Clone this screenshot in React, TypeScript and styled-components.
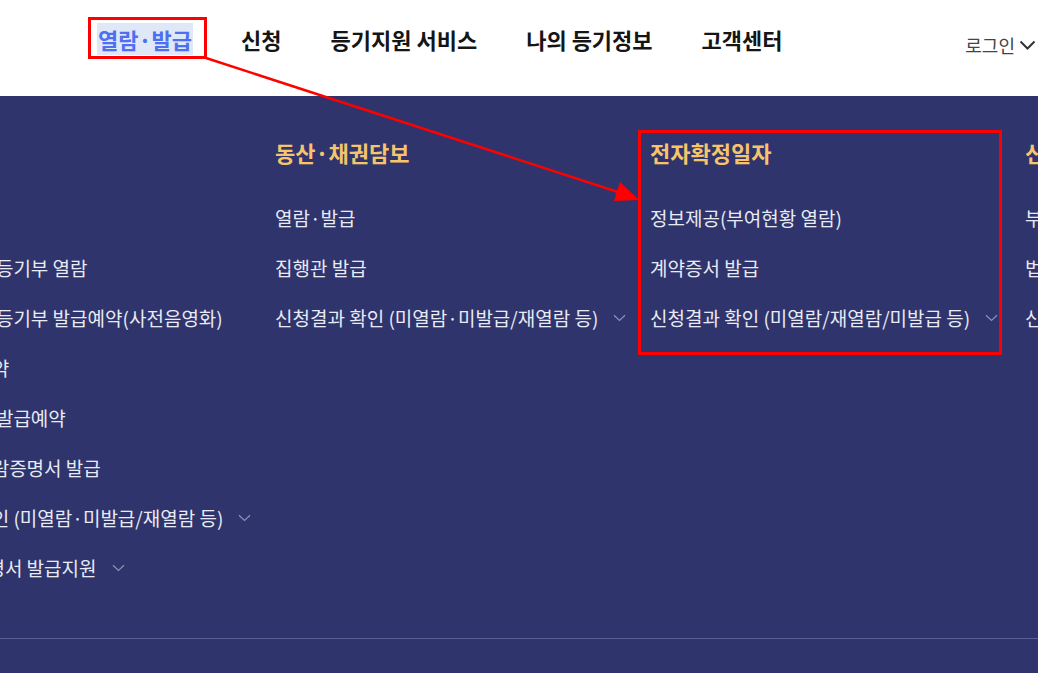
import React from "react";
import styled, { createGlobalStyle } from "styled-components";

const GlobalStyle = createGlobalStyle`
  * { box-sizing: border-box; }
  html, body { margin: 0; padding: 0; }
  body {
    font-family: "Noto Sans CJK KR", "Noto Sans", sans-serif;
    background: #ffffff;
    overflow: hidden;
  }
`;

const Page = styled.div`
  position: relative;
  width: 1038px;
  height: 673px;
  overflow: hidden;
`;

const Header = styled.header`
  height: 96px;
  background: #ffffff;
  display: flex;
  align-items: flex-start;
  padding-left: 97px;
`;

const Nav = styled.nav`
  display: flex;
  gap: 47px;
  padding-top: 23px;
`;

const NavItem = styled.a<{ $active?: boolean }>`
  font-size: 22px;
  font-weight: 700;
  line-height: 32px;
  color: ${(p) => (p.$active ? "#4e6ff2" : "#151515")};
  background: ${(p) => (p.$active ? "#dfe8f6" : "transparent")};
  padding: 0 1px;
  text-decoration: none;
  white-space: nowrap;
`;

const Login = styled.div`
  margin-left: auto;
  padding-top: 32px;
  display: flex;
  align-items: center;
  gap: 4px;
  font-size: 18px;
  color: #444;
  line-height: 26px;
  margin-right: 2px;
`;

const Panel = styled.section`
  background: #2f346c;
  height: 577px;
  display: flex;
  flex-direction: column;
`;

const Columns = styled.div`
  display: flex;
  margin-left: -100px;
  padding-top: 42px;
  height: 542px;
`;

const Column = styled.div`
  flex: 0 0 375px;
  display: flex;
  flex-direction: column;
`;

const Heading = styled.h3`
  margin: 0 0 26px;
  font-size: 22px;
  font-weight: 700;
  line-height: 29px;
  color: #f7c46c;
  white-space: nowrap;
`;

const Item = styled.div`
  height: 50px;
  display: flex;
  align-items: center;
  font-size: 19px;
  line-height: 26px;
  color: #e8eaf4;
  white-space: nowrap;
`;

const Chevron = styled.svg`
  margin-left: 15px;
  flex: none;
`;

const Divider = styled.hr`
  margin: 0;
  border: 0;
  height: 1px;
  background: #5b6093;
`;

const Overlay = styled.svg`
  position: absolute;
  left: 0;
  top: 0;
  pointer-events: none;
`;

const Down = () => (
  <Chevron width="13" height="8" viewBox="0 0 13 8">
    <path d="M1 1.2 L6.5 6.5 L12 1.2" fill="none" stroke="#8c91ba" strokeWidth="1.2" />
  </Chevron>
);

type Col = { title: string; items: { label: string; more?: boolean }[] };

const columns: Col[] = [
  {
    title: "등기부",
    items: [
      { label: "열람·발급" },
      { label: "부동산 법인 등기부 열람" },
      { label: "부동산 법인 등기부 발급예약(사전음영화)" },
      { label: "등기열람 예약" },
      { label: "부동산 법인 발급예약" },
      { label: "등기사항 열람증명서 발급" },
      { label: "신청결과 확인 (미열람·미발급/재열람 등)", more: true },
      { label: "법인인감증명서 발급지원", more: true },
    ],
  },
  {
    title: "동산·채권담보",
    items: [
      { label: "열람·발급" },
      { label: "집행관 발급" },
      { label: "신청결과 확인 (미열람·미발급/재열람 등)", more: true },
    ],
  },
  {
    title: "전자확정일자",
    items: [
      { label: "정보제공(부여현황 열람)" },
      { label: "계약증서 발급" },
      { label: "신청결과 확인 (미열람/재열람/미발급 등)", more: true },
    ],
  },
  {
    title: "신탁원부",
    items: [
      { label: "부동산 신탁원부 열람" },
      { label: "법인 신탁원부 발급" },
      { label: "신청결과 확인" },
    ],
  },
];

export default function App() {
  return (
    <>
      <GlobalStyle />
      <Page>
        <Header>
          <Nav>
            <NavItem $active>열람·발급</NavItem>
            <NavItem>신청</NavItem>
            <NavItem>등기지원 서비스</NavItem>
            <NavItem>나의 등기정보</NavItem>
            <NavItem>고객센터</NavItem>
          </Nav>
          <Login>
            로그인
            <svg width="17" height="11" viewBox="0 0 17 11">
              <path d="M1.5 1.5 L8.5 8.5 L15.5 1.5" fill="none" stroke="#333" strokeWidth="2" />
            </svg>
          </Login>
        </Header>
        <Panel>
          <Columns>
            {columns.map((c) => (
              <Column key={c.title}>
                <Heading>{c.title}</Heading>
                {c.items.map((it) => (
                  <Item key={it.label}>
                    {it.label}
                    {it.more && <Down />}
                  </Item>
                ))}
              </Column>
            ))}
          </Columns>
          <Divider />
        </Panel>
        <Overlay width="1038" height="673" viewBox="0 0 1038 673">
          <rect x="89.5" y="18.5" width="116" height="39" fill="none" stroke="#ff0000" strokeWidth="3" />
          <rect x="639.5" y="131.5" width="361" height="222" fill="none" stroke="#ff0000" strokeWidth="3" />
          <line x1="206" y1="58" x2="624" y2="194" stroke="#ff0000" strokeWidth="2.5" />
          <polygon points="639,200 620,182 614,201" fill="#ff0000" />
        </Overlay>
      </Page>
    </>
  );
}
